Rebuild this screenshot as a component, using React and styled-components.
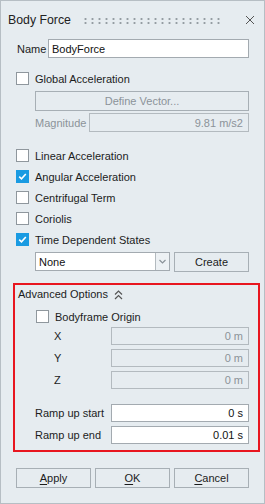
import React from 'react'
import styled, { createGlobalStyle } from 'styled-components'

const Global = createGlobalStyle`
  body {
    margin: 0;
    font-family: "Liberation Sans", Arial, sans-serif;
    color: #1c1c1c;
  }
`

function Check({ checked }) {
  return (
    <Box checked={checked}>
      {checked && (
        <svg width="9" height="9" viewBox="0 0 9 9">
          <path d="M1.2 4.6 L3.5 6.8 L7.8 2" fill="none" stroke="#fff" strokeWidth="1.6" />
        </svg>
      )}
    </Box>
  )
}

function CheckItem({ label, checked, indent }) {
  return (
    <CheckRow indent={indent}>
      <Check checked={checked} />
      <span>{label}</span>
    </CheckRow>
  )
}

function App() {
  return (
    <>
      <Global />
      <Panel>
        <Header>
          <Title>Body Force</Title>
          <Grip />
          <Close>
            <svg width="10" height="10" viewBox="0 0 10 10">
              <path d="M1 1 L9 9 M9 1 L1 9" stroke="#555" strokeWidth="1" />
            </svg>
          </Close>
        </Header>

        <NameRow>
          <Label>Name</Label>
          <Input value="BodyForce" readOnly />
        </NameRow>

        <Spacer h={10} />
        <CheckItem label="Global Acceleration" />
        <Spacer h={2} />
        <WideButton disabled>Define Vector...</WideButton>
        <Spacer h={2} />
        <MagRow>
          <Label muted>Magnitude</Label>
          <ValueBox disabled>9.81 m/s2</ValueBox>
        </MagRow>

        <Spacer h={13} />
        <CheckItem label="Linear Acceleration" />
        <CheckItem label="Angular Acceleration" checked />
        <CheckItem label="Centrifugal Term" />
        <CheckItem label="Coriolis" />
        <CheckItem label="Time Dependent States" checked />
        <Spacer h={2} />
        <SelectRow>
          <Select>
            <span>None</span>
            <Arrow>
              <svg width="7" height="5" viewBox="0 0 7 5">
                <path d="M0.5 1 L3.5 4 L6.5 1" fill="none" stroke="#8a9298" strokeWidth="1.2" />
              </svg>
            </Arrow>
          </Select>
          <Button w={75}>Create</Button>
        </SelectRow>

        <Advanced>
          <AdvHead>
            <span>Advanced Options</span>
            <svg width="9" height="10" viewBox="0 0 9 10">
              <path d="M1 4.5 L4.5 1 L8 4.5 M1 9 L4.5 5.5 L8 9" fill="none" stroke="#555" strokeWidth="1.2" />
            </svg>
          </AdvHead>
          <Spacer h={3} />
          <CheckItem label="Bodyframe Origin" indent={21} />
          <FieldRow pad={39}>
            <span>X</span>
            <ValueBox disabled>0 m</ValueBox>
          </FieldRow>
          <Spacer h={4} />
          <FieldRow pad={39}>
            <span>Y</span>
            <ValueBox disabled>0 m</ValueBox>
          </FieldRow>
          <Spacer h={4} />
          <FieldRow pad={39}>
            <span>Z</span>
            <ValueBox disabled>0 m</ValueBox>
          </FieldRow>
          <Spacer h={15} />
          <FieldRow pad={20}>
            <span>Ramp up start</span>
            <ValueBox>0 s</ValueBox>
          </FieldRow>
          <Spacer h={4} />
          <FieldRow pad={20}>
            <span>Ramp up end</span>
            <ValueBox>0.01 s</ValueBox>
          </FieldRow>
        </Advanced>

        <Footer>
          <Button w={75}><u>A</u>pply</Button>
          <Button w={75}><u>O</u>K</Button>
          <Button w={75}><u>C</u>ancel</Button>
        </Footer>
      </Panel>
    </>
  )
}

export default App

const Panel = styled.div`
  box-sizing: border-box;
  width: 265px;
  height: 504px;
  border: 1px solid #b6bec4;
  background: #e6ecf0;
  padding: 0 15px;
  display: flex;
  flex-direction: column;
  font-size: 11px;
`

const Header = styled.div`
  height: 38px;
  margin: 0 -8px;
  display: flex;
  align-items: center;
`

const Title = styled.div`
  width: 74px;
  font-size: 12.3px;
  color: #222;
`

const Grip = styled.div`
  width: 141px;
  height: 8px;
  margin-top: 1px;
  background-image: radial-gradient(circle, #959da3 1px, transparent 1.2px);
  background-size: 7px 4px;
  background-position: 0 0;
`

const Close = styled.div`
  margin-left: auto;
  margin-right: 2px;
  width: 10px;
  height: 10px;
  display: flex;
`

const NameRow = styled.div`
  height: 19px;
  display: flex;
  align-items: center;
`

const Label = styled.span`
  width: 31px;
  padding-left: 1px;
  color: ${p => (p.muted ? '#8b9399' : '#1c1c1c')};
  ${p => p.muted && 'width: 54px; padding-left: 19px;'}
`

const Input = styled.input`
  flex: 1;
  min-width: 0;
  box-sizing: border-box;
  height: 19px;
  border: 1px solid #a3aab0;
  background: #fff;
  font: 11px "Liberation Sans", Arial, sans-serif;
  padding: 0 3px;
  color: #111;
  outline: none;
`

const Spacer = styled.div`
  height: ${p => p.h}px;
  flex: none;
`

const CheckRow = styled.div`
  height: 21px;
  display: flex;
  align-items: center;
  gap: 6px;
  padding-left: ${p => p.indent || 0}px;
`

const Box = styled.div`
  box-sizing: border-box;
  width: 13px;
  height: 13px;
  border: 1px solid ${p => (p.checked ? '#1a9be2' : '#8f979d')};
  background: ${p => (p.checked ? '#1a9be2' : '#fff')};
  display: flex;
  align-items: center;
  justify-content: center;
`

const Button = styled.div`
  box-sizing: border-box;
  width: ${p => (p.w ? `${p.w}px` : 'auto')};
  height: 20px;
  border: 1px solid #a7afb5;
  background: #e6ecf0;
  display: flex;
  align-items: center;
  justify-content: center;
  color: ${p => (p.disabled ? '#8b9399' : '#1c1c1c')};
  u {
    text-decoration-thickness: 1px;
    text-underline-offset: 2px;
  }
`

const WideButton = styled(Button)`
  margin-left: 19px;
`

const MagRow = styled.div`
  height: 19px;
  display: flex;
  align-items: center;
`

const ValueBox = styled.div`
  box-sizing: border-box;
  margin-left: auto;
  width: ${p => (p.disabled ? '160px' : '138px')};
  height: 100%;
  border: 1px solid ${p => (p.disabled ? '#b3babf' : '#a3aab0')};
  background: ${p => (p.disabled ? '#e6ecf0' : '#fff')};
  color: ${p => (p.disabled ? '#8b9399' : '#111')};
  display: flex;
  align-items: center;
  justify-content: flex-end;
  padding-right: 5px;
`

const SelectRow = styled.div`
  height: 19px;
  padding-left: 19px;
  display: flex;
  justify-content: space-between;
`

const Select = styled.div`
  box-sizing: border-box;
  width: 135px;
  height: 19px;
  border: 1px solid #a3aab0;
  background: #fff;
  display: flex;
  align-items: center;
  padding-left: 3px;
  color: #111;
  span {
    flex: 1;
  }
`

const Arrow = styled.div`
  box-sizing: border-box;
  width: 14px;
  height: 100%;
  border-left: 1px solid #b3babf;
  background: #edf1f4;
  display: flex;
  align-items: center;
  justify-content: center;
`

const Advanced = styled.div`
  box-sizing: border-box;
  margin: 12px -11px 0 -3px;
  height: 169px;
  border: 2px solid #e8161f;
  padding: 0 9px 6px 0;
  display: flex;
  flex-direction: column;
`

const AdvHead = styled.div`
  height: 18px;
  padding-left: 3px;
  display: flex;
  align-items: center;
  gap: 6px;
  svg {
    margin-top: 1px;
  }
`

const FieldRow = styled.div`
  height: 18px;
  display: flex;
  align-items: center;
  padding-left: ${p => p.pad}px;
  ${ValueBox} {
    width: 138px;
  }
`

const Footer = styled.div`
  margin-top: 16px;
  display: flex;
  justify-content: space-between;
`
